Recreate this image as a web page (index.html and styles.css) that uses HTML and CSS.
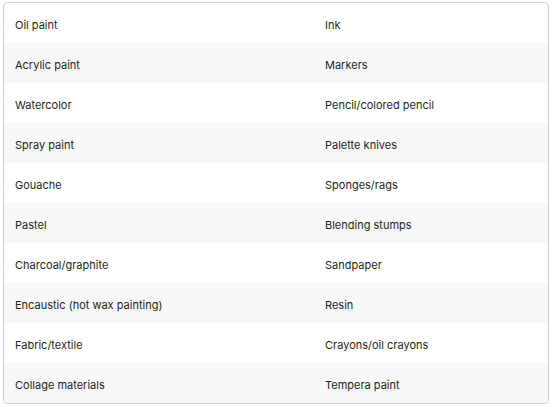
FILE: index.html
```html
<!DOCTYPE html>
<html>
<head>
<meta charset="utf-8">
<link rel="stylesheet" href="styles.css">
</head>
<body>
<div class="wrap">
<table class="grid">
<colgroup><col class="c1"><col class="c2"></colgroup>
<tbody>
<tr><td>Oil paint</td><td>Ink</td></tr>
<tr><td>Acrylic paint</td><td>Markers</td></tr>
<tr><td>Watercolor</td><td>Pencil/colored pencil</td></tr>
<tr><td>Spray paint</td><td>Palette knives</td></tr>
<tr><td>Gouache</td><td>Sponges/rags</td></tr>
<tr><td>Pastel</td><td>Blending stumps</td></tr>
<tr><td>Charcoal/graphite</td><td>Sandpaper</td></tr>
<tr><td>Encaustic (hot wax painting)</td><td>Resin</td></tr>
<tr><td>Fabric/textile</td><td>Crayons/oil crayons</td></tr>
<tr><td>Collage materials</td><td>Tempera paint</td></tr>
</tbody>
</table>
</div>
</body>
</html>
```
FILE: styles.css
```css
html, body { margin: 0; padding: 0; background: #fff; }
.wrap {
  margin: 2px 0 0 3px;
  width: 544px;
  border: 1px solid #cfcfd2;
  border-radius: 4px;
  overflow: hidden;
}
.grid {
  width: 100%;
  border-collapse: collapse;
  table-layout: fixed;
  font-family: Inter, "Liberation Sans", sans-serif;
  font-size: 11px;
  color: #1f1f22;
}
.c1 { width: 310px; }
.grid td {
  height: 40px;
  padding: 3px 11px 0;
  box-sizing: border-box;
  vertical-align: middle;
}
.grid tr:nth-child(even) td { background: #f7f8fa; }
```
